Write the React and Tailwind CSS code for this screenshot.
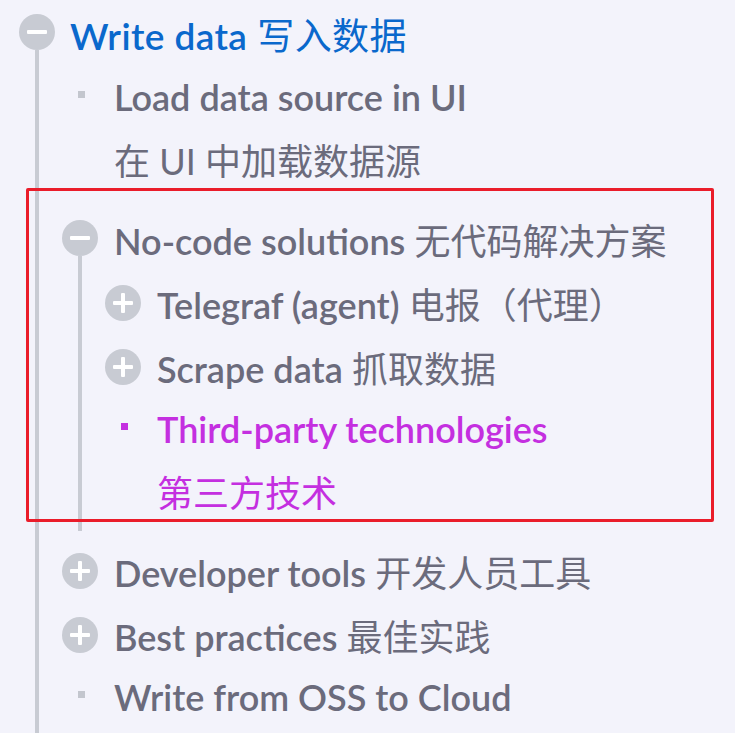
const GRAY = "text-[#6b6b7c]";

function Circle({ open }) {
  return (
    <div className="flex h-9 w-9 shrink-0 items-center justify-center rounded-full bg-[#c8cbd3]">
      <div className="relative h-[4px] w-5 rounded-[1px] bg-white">
        {!open && (
          <div className="absolute left-[8px] top-[-8px] h-5 w-[4px] rounded-[1px] bg-white" />
        )}
      </div>
    </div>
  );
}

function Label({ en, zh, color, block }) {
  return (
    <div className={`leading-[64px] ${color}`}>
      <span className="font-semibold">{en}</span>
      {zh && (block ? <br /> : " ")}
      {zh && <span className="font-normal">{zh}</span>}
    </div>
  );
}

// group with a circle toggle; open groups draw the tree line under the circle
function Group({ en, zh, open, color = GRAY, gap = "ml-4", iconTop = "pt-[11px]", className = "", children }) {
  return (
    <li className={className}>
      <div className="flex items-stretch">
        <div className={`flex w-9 shrink-0 flex-col items-center ${iconTop}`}>
          <Circle open={open} />
          {open && <div className="w-1 flex-1 bg-[#c8cbd3]" />}
        </div>
        <div className={gap}>
          <Label en={en} zh={zh} color={color} />
        </div>
      </div>
      {open && (
        <ul className="ml-4 border-l-4 border-[#c8cbd3] pl-[23px] text-[36px]">{children}</ul>
      )}
    </li>
  );
}

function Leaf({ en, zh, color = GRAY, dot = "bg-[#c3c6ce]", className = "" }) {
  return (
    <li className={`flex items-start ${className}`}>
      <div className="flex w-9 shrink-0 justify-center pt-[26px]">
        <div className={`ml-[2px] h-[7px] w-[7px] ${dot}`} />
      </div>
      <div className="ml-4">
        <Label en={en} zh={zh} color={color} block />
      </div>
    </li>
  );
}

export default function App() {
  return (
    <div
      className="relative h-[733px] w-[735px] overflow-hidden bg-[#f3f3fb] pl-[19px] pt-[4px] text-[37px]"
      style={{ fontFamily: "Lato, 'Noto Sans CJK SC', sans-serif" }}
    >
      <ul>
        <Group en="Write data" zh="写入数据" open color="text-[#0a68cc] tracking-[0.4px]" gap="ml-[15px]" iconTop="pt-[10px]">
          <Leaf className="mt-[-3px]" en="Load data source in UI" zh="在 UI 中加载数据源" />
          <Group className="mt-4" en="No-code solutions" zh="无代码解决方案" open>
            <Group en="Telegraf (agent)" zh="电报（代理）" iconTop="pt-[12px]" />
            <Group en="Scrape data" zh="抓取数据" iconTop="pt-[12px]" />
            <Leaf
              className="mt-[-4px] pb-[6px]"
              en="Third-party technologies"
              zh="第三方技术"
              color="text-[#c42fe0]"
              dot="bg-[#c42fe0]"
            />
          </Group>
          <Group className="mt-[10px]" en="Developer tools" zh="开发人员工具" iconTop="pt-[12px]" />
          <Group en="Best practices" zh="最佳实践" iconTop="pt-[12px]" />
          <Leaf className="mt-[-4px] pb-[60px]" en="Write from OSS to Cloud" />
        </Group>
      </ul>

      {/* annotation box */}
      <div className="pointer-events-none absolute left-[26px] top-[188px] h-[334px] w-[688px] rounded-[2px] border-[3px] border-[#ea1c2a]" />
    </div>
  );
}
